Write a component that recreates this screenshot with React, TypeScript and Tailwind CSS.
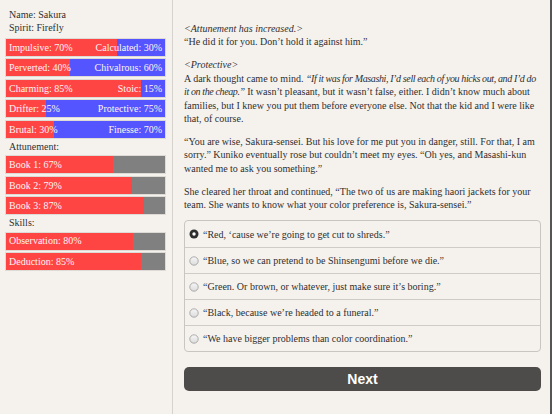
import React from "react";

const opposed: [string, number, string, number][] = [
  ["Impulsive", 70, "Calculated", 30],
  ["Perverted", 40, "Chivalrous", 60],
  ["Charming", 85, "Stoic", 15],
  ["Drifter", 25, "Protective", 75],
  ["Brutal", 30, "Finesse", 70],
];

const attunement: [string, number][] = [
  ["Book 1", 67],
  ["Book 2", 79],
  ["Book 3", 87],
];

const skills: [string, number][] = [
  ["Observation", 80],
  ["Deduction", 85],
];

const choices = [
  "“Red, ‘cause we’re going to get cut to shreds.”",
  "“Blue, so we can pretend to be Shinsengumi before we die.”",
  "“Green. Or brown, or whatever, just make sure it’s boring.”",
  "“Black, because we’re headed to a funeral.”",
  "“We have bigger problems than color coordination.”",
];

function OpposedBar({ l, p, r, q }: { l: string; p: number; r: string; q: number }) {
  return (
    <div
      className="flex h-[19px] items-center justify-between border border-[#dedbd6] px-[3px] text-[#fff4f4]"
      style={{ background: `linear-gradient(to right, #ff4444 ${p}%, #5555ff ${p}%)` }}
    >
      <span>
        {l}: {p}%
      </span>
      <span>
        {r}: {q}%
      </span>
    </div>
  );
}

function Bar({ l, p }: { l: string; p: number }) {
  return (
    <div
      className="flex h-[19px] items-center border border-[#dedbd6] px-[3px] text-[#fff4f4]"
      style={{ background: `linear-gradient(to right, #ff4444 ${p}%, #808080 ${p}%)` }}
    >
      <span>
        {l}: {p}%
      </span>
    </div>
  );
}

function Radio({ on }: { on: boolean }) {
  return (
    <svg width="10" height="10" viewBox="0 0 10 10" className="shrink-0">
      {on ? (
        <>
          <circle cx="5" cy="5" r="4.5" fill="#2e2e2e" />
          <circle cx="5" cy="5" r="1.7" fill="#ffffff" />
        </>
      ) : (
        <>
          <defs>
            <linearGradient id="rg" x1="0" y1="0" x2="0" y2="1">
              <stop offset="0" stopColor="#f6f6f6" />
              <stop offset="1" stopColor="#dcdcdc" />
            </linearGradient>
          </defs>
          <circle cx="5" cy="5" r="4.2" fill="url(#rg)" stroke="#9a9a9a" strokeWidth="0.8" />
        </>
      )}
    </svg>
  );
}

export default function App() {
  return (
    <div className="flex h-[414px] w-[552px] border-r-2 border-[#555555] bg-[#f5f2ee] font-['Liberation_Serif',serif] text-[10px] leading-[13.4px] text-[#2f2f2f]">
      <div className="flex w-[173px] shrink-0 flex-col border-r border-[#d6d3ce] pl-[5px] pr-[6px] pt-[8px]">
        <div className="pl-[4px]">Name: Sakura</div>
        <div className="pl-[4px]">Spirit: Firefly</div>
        <div className="mt-[3px] flex flex-col gap-[1.5px]">
          {opposed.map(([l, p, r, q]) => (
            <OpposedBar key={l} l={l} p={p} r={r} q={q} />
          ))}
        </div>
        <div className="mb-[2px] mt-[1px] pl-[4px]">Attunement:</div>
        <div className="flex flex-col gap-[1.5px]">
          {attunement.map(([l, p]) => (
            <Bar key={l} l={l} p={p} />
          ))}
        </div>
        <div className="mb-[2px] mt-[1px] pl-[4px]">Skills:</div>
        <div className="flex flex-col gap-[1.5px]">
          {skills.map(([l, p]) => (
            <Bar key={l} l={l} p={p} />
          ))}
        </div>
      </div>

      <div className="flex min-w-0 flex-1 flex-col pl-[11px] pr-[9px] pt-[22px]">
        <div className="flex flex-col gap-[9.5px]">
          <p>
            <i>&lt;Attunement has increased.&gt;</i>
            <br />
            “He did it for you. Don’t hold it against him.”
          </p>
          <p>
            <i>&lt;Protective&gt;</i>
            <br />
            A dark thought came to mind.{" "}
            <i className="tracking-[-0.38px]">
              “If it was for Masashi, I’d sell each of you hicks out, and I’d do it on the cheap.”
            </i>{" "}
            It wasn’t pleasant, but it wasn’t false, either. I didn’t know much about families, but I knew you put them
            before everyone else. Not that the kid and I were like that, of course.
          </p>
          <p>
            “You are wise, Sakura-sensei. But his love for me put you in danger, still. For that, I am sorry.” Kuniko
            eventually rose but couldn’t meet my eyes. “Oh yes, and Masashi-kun wanted me to ask you something.”
          </p>
          <p>
            She cleared her throat and continued, “The two of us are making haori jackets for your team. She wants to
            know what your color preference is, Sakura-sensei.”
          </p>
        </div>

        <div className="mt-[9px] flex flex-col rounded-[4px] border border-[#c9c6c1]">
          {choices.map((c, i) => (
            <div
              key={i}
              className={`flex h-[26px] items-center gap-[4px] pl-[4px] ${i > 0 ? "border-t border-[#cfccc7]" : ""}`}
            >
              <Radio on={i === 0} />
              <span>{c}</span>
            </div>
          ))}
        </div>

        <button className="mt-[15px] flex h-[24px] items-center justify-center rounded-[5px] bg-[#4e4c4a] font-['Liberation_Sans',sans-serif] text-[14px] font-bold text-white">
          Next
        </button>
      </div>
    </div>
  );
}
